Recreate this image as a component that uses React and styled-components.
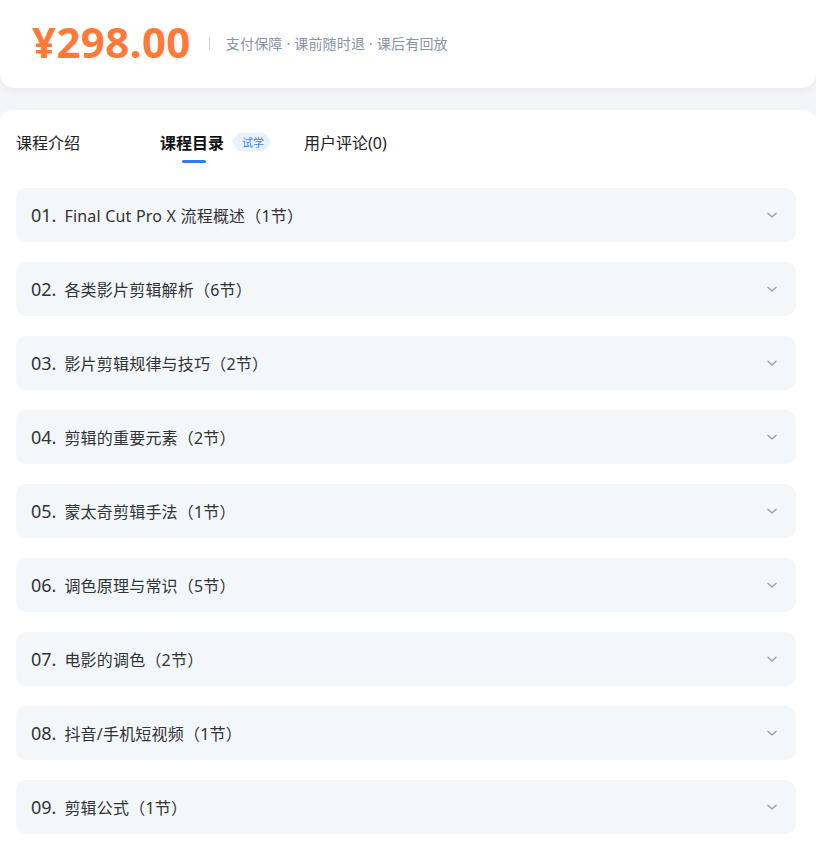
import React, { useState } from "react";
import styled, { createGlobalStyle } from "styled-components";

const GlobalStyle = createGlobalStyle`
  body {
    margin: 0;
    background: #f3f5f8;
    font-family: "Noto Sans", "Noto Sans CJK SC", sans-serif;
    color: #333;
  }
`;

const chapters = [
  "Final Cut Pro X 流程概述（1节）",
  "各类影片剪辑解析（6节）",
  "影片剪辑规律与技巧（2节）",
  "剪辑的重要元素（2节）",
  "蒙太奇剪辑手法（1节）",
  "调色原理与常识（5节）",
  "电影的调色（2节）",
  "抖音/手机短视频（1节）",
  "剪辑公式（1节）",
];

const tabs = [
  { key: "intro", label: "课程介绍" },
  { key: "catalog", label: "课程目录", badge: "试学" },
  { key: "review", label: "用户评论(0)" },
];

const App = () => {
  const [active, setActive] = useState("catalog");

  return (
    <Page>
      <GlobalStyle />
      <PriceCard>
        <Price>¥298.00</Price>
        <Divider />
        <Promise>支付保障 · 课前随时退 · 课后有回放</Promise>
      </PriceCard>

      <Content>
        <Tabs>
          {tabs.map((t) => (
            <Tab key={t.key} onClick={() => setActive(t.key)}>
              <TabLabel $active={active === t.key}>{t.label}</TabLabel>
              {t.badge && <Badge>{t.badge}</Badge>}
            </Tab>
          ))}
        </Tabs>

        <List>
          {chapters.map((title, i) => (
            <Row key={i}>
              <RowNum>{String(i + 1).padStart(2, "0")}.</RowNum>
              <RowTitle>{title}</RowTitle>
              <Chevron viewBox="0 0 12 12">
                <path d="M2.5 4.5 L6 7.8 L9.5 4.5" />
              </Chevron>
            </Row>
          ))}
        </List>
      </Content>
    </Page>
  );
};

export default App;

const Page = styled.div`
  display: flex;
  flex-direction: column;
  gap: 22px;
`;

const PriceCard = styled.div`
  display: flex;
  align-items: center;
  height: 88px;
  padding: 0 32px;
  background: #fff;
  border-radius: 0 0 14px 14px;
  box-shadow: 0 2px 8px rgba(30, 50, 90, 0.06);
`;

const Price = styled.div`
  font-size: 42px;
  font-weight: 700;
  color: #ff7a38;
  letter-spacing: 0.4px;
  line-height: 1;
  margin-top: -5px;
`;

const Divider = styled.span`
  width: 1px;
  height: 13px;
  background: #c9ced6;
  margin: -2px 16px 0 18px;
`;

const Promise = styled.div`
  font-size: 14px;
  color: #8a93a3;
  letter-spacing: 0.2px;
  margin-top: -3px;
`;

const Content = styled.div`
  background: #fff;
  border-radius: 12px 12px 0 0;
  padding: 0 20px 20px 16px;
  min-height: 760px;
`;

const Tabs = styled.div`
  display: flex;
  height: 64px;
  margin-bottom: 14px;
`;

const Tab = styled.div`
  width: 144px;
  display: flex;
  align-items: center;
  gap: 10px;
  cursor: pointer;
`;

const TabLabel = styled.span`
  position: relative;
  font-size: 16px;
  font-weight: ${(p) => (p.$active ? 700 : 400)};
  color: ${(p) => (p.$active ? "#111" : "#222")};

  &::after {
    content: "";
    display: ${(p) => (p.$active ? "block" : "none")};
    position: absolute;
    left: 50%;
    bottom: -9px;
    width: 24px;
    height: 3px;
    margin-left: -10px;
    border-radius: 2px;
    background: #2d7cf6;
  }
`;

const Badge = styled.span`
  position: relative;
  display: inline-flex;
  align-items: center;
  height: 18px;
  padding: 0 6px 0 4px;
  margin-left: 4px;
  font-size: 11px;
  color: #3d84f5;
  background: #e7f1ff;
  border-radius: 0 9px 9px 0;

  &::before {
    content: "";
    position: absolute;
    left: -6px;
    top: 0;
    border-style: solid;
    border-width: 9px 6px 9px 0;
    border-color: transparent #e7f1ff transparent transparent;
  }
`;

const List = styled.div`
  display: flex;
  flex-direction: column;
  gap: 20px;
`;

const Row = styled.div`
  display: flex;
  align-items: center;
  height: 54px;
  padding: 0 17px 0 15px;
  background: #f4f7fa;
  border-radius: 10px;
  cursor: pointer;
`;

const RowNum = styled.span`
  font-size: 18px;
  color: #333;
  margin-right: 8px;
`;

const RowTitle = styled.span`
  flex: 1;
  font-size: 16px;
  color: #333;
  letter-spacing: 0.2px;
`;

const Chevron = styled.svg`
  width: 14px;
  height: 14px;
  fill: none;
  stroke: #9aa0aa;
  stroke-width: 1.2;
  stroke-linecap: round;
  stroke-linejoin: round;
`;
